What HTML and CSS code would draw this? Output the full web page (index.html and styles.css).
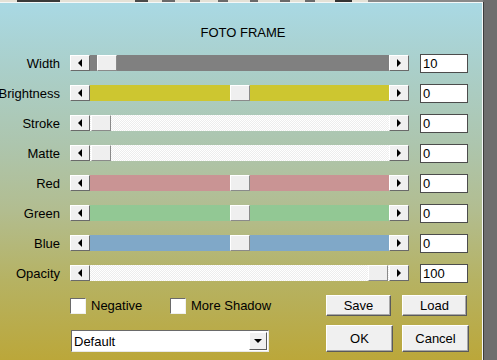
FILE: index.html
```html
<!DOCTYPE html>
<html>
<head>
<meta charset="utf-8">
<link rel="stylesheet" href="styles.css">
</head>
<body>
<div class="strip"></div>
<div class="desk">
  <div class="dialog">
    <div class="title">FOTO FRAME</div>

    <div class="row">
      <div class="label">Width</div>
      <div class="slider">
        <div class="abtn"><span class="tri-l"></span></div>
        <div class="track t-gray"><div class="thumb" style="left:7px"></div></div>
        <div class="abtn"><span class="tri-r"></span></div>
      </div>
      <div class="num">10</div>
    </div>

    <div class="row">
      <div class="label">Brightness</div>
      <div class="slider">
        <div class="abtn"><span class="tri-l"></span></div>
        <div class="track t-yellow"><div class="thumb" style="left:140px"></div></div>
        <div class="abtn"><span class="tri-r"></span></div>
      </div>
      <div class="num">0</div>
    </div>

    <div class="row">
      <div class="label">Stroke</div>
      <div class="slider">
        <div class="abtn"><span class="tri-l"></span></div>
        <div class="track t-white"><div class="thumb" style="left:1px"></div></div>
        <div class="abtn"><span class="tri-r"></span></div>
      </div>
      <div class="num">0</div>
    </div>

    <div class="row">
      <div class="label">Matte</div>
      <div class="slider">
        <div class="abtn"><span class="tri-l"></span></div>
        <div class="track t-white"><div class="thumb" style="left:1px"></div></div>
        <div class="abtn"><span class="tri-r"></span></div>
      </div>
      <div class="num">0</div>
    </div>

    <div class="row">
      <div class="label">Red</div>
      <div class="slider">
        <div class="abtn"><span class="tri-l"></span></div>
        <div class="track t-red"><div class="thumb" style="left:140px"></div></div>
        <div class="abtn"><span class="tri-r"></span></div>
      </div>
      <div class="num">0</div>
    </div>

    <div class="row">
      <div class="label">Green</div>
      <div class="slider">
        <div class="abtn"><span class="tri-l"></span></div>
        <div class="track t-green"><div class="thumb" style="left:140px"></div></div>
        <div class="abtn"><span class="tri-r"></span></div>
      </div>
      <div class="num">0</div>
    </div>

    <div class="row">
      <div class="label">Blue</div>
      <div class="slider">
        <div class="abtn"><span class="tri-l"></span></div>
        <div class="track t-blue"><div class="thumb" style="left:140px"></div></div>
        <div class="abtn"><span class="tri-r"></span></div>
      </div>
      <div class="num">0</div>
    </div>

    <div class="row">
      <div class="label">Opacity</div>
      <div class="slider">
        <div class="abtn"><span class="tri-l"></span></div>
        <div class="track t-white"><div class="thumb" style="left:278px"></div></div>
        <div class="abtn"><span class="tri-r"></span></div>
      </div>
      <div class="num">100</div>
    </div>

    <div class="bottom-a">
      <div class="checks">
        <label class="check c1"><span class="box"></span>Negative</label>
        <label class="check"><span class="box"></span>More Shadow</label>
      </div>
      <div class="btn small">Save</div>
      <div class="btn small">Load</div>
    </div>

    <div class="bottom-b">
      <div class="select">
        <span class="sel-text">Default</span>
        <span class="sel-btn"><span class="tri-d"></span></span>
      </div>
      <div class="btn big ok">OK</div>
      <div class="btn big">Cancel</div>
    </div>
  </div>
  <div class="side"></div>
</div>
</body>
</html>
```

FILE: styles.css
```css
html, body {
  margin: 0;
  padding: 0;
}
body {
  width: 497px;
  height: 360px;
  overflow: hidden;
  background: #6e6e6e;
  font-family: "Liberation Sans", Arial, sans-serif;
  font-size: 13px;
  color: #000;
}
.strip {
  height: 2px;
  background:
    linear-gradient(90deg, transparent 0 17px, #3a3a3a 17px 60px, transparent 60px 135px, #4a4a4a 135px 148px, transparent 148px 162px, #6a6a6a 162px 175px, transparent 175px 190px, #6a6a6a 190px 200px, transparent 200px 218px, #6a6a6a 218px 228px, transparent 228px 250px, #6a6a6a 250px 258px, transparent 258px 280px, #6a6a6a 280px 290px, transparent 290px 305px, #6a6a6a 305px 315px, transparent 315px 335px, #333 335px 352px, transparent 352px 368px, #8a8a8a 368px 483px, #6e6e6e 483px),
    #e4e1d6;
}
.desk {
  display: flex;
  height: 358px;
  overflow: hidden;
}
.dialog {
  width: 483px;
  height: 358px;
  box-sizing: border-box;
  flex: none;
  border-top: 1px solid #f4f8f8;
  border-right: 1px solid #f4f8f8;
  box-shadow: 1px 0 0 #3c3c3c;
  background: linear-gradient(180deg, #a9d9e4 0%, #aacfca 18%, #adc5ad 40%, #b2bd90 58%, #b6b262 78%, #bba73a 100%);
  padding-top: 22px;
}
.side {
  flex: 1;
}
.title {
  height: 16px;
  line-height: 16px;
  text-align: center;
  margin-bottom: 7px;
  padding-left: 4px;
}
.row {
  display: flex;
  align-items: center;
  height: 30px;
}
.label {
  width: 60px;
  text-align: right;
  margin-right: 10px;
  white-space: nowrap;
  direction: rtl;
}
.slider {
  display: flex;
  width: 339px;
  height: 16px;
}
.abtn {
  width: 20px;
  height: 16px;
  box-sizing: border-box;
  background: #f0f0f0;
  border-top: 1px solid #fff;
  border-left: 1px solid #fff;
  border-right: 1px solid #6a6a6a;
  border-bottom: 1px solid #6a6a6a;
  display: flex;
  align-items: center;
  justify-content: center;
  flex: none;
}
.tri-l {
  width: 0;
  height: 0;
  border-top: 4px solid transparent;
  border-bottom: 4px solid transparent;
  border-right: 4px solid #000;
}
.tri-r {
  width: 0;
  height: 0;
  border-top: 4px solid transparent;
  border-bottom: 4px solid transparent;
  border-left: 4px solid #000;
}
.track {
  position: relative;
  flex: 1;
  height: 16px;
}
.t-gray { background: #808080; }
.t-yellow { background: #cdc630; }
.t-red { background: #c99494; }
.t-green { background: #92c894; }
.t-blue { background: #80a8c8; }
.t-white {
  background: repeating-conic-gradient(#ffffff 0 25%, #ededed 0 50%) 0 0 / 2px 2px;
}
.thumb {
  position: absolute;
  top: 0;
  width: 20px;
  height: 16px;
  box-sizing: border-box;
  background: #efefef;
  border-top: 1px solid #fff;
  border-left: 1px solid #fff;
  border-right: 1px solid #8a8a8a;
  border-bottom: 1px solid #8a8a8a;
}
.num {
  margin-left: 11px;
  width: 48px;
  height: 19px;
  box-sizing: border-box;
  background: #fff;
  border: 1px solid #4c4c4c;
  padding-left: 2px;
  line-height: 17px;
  font-size: 13px;
}
.bottom-a {
  display: flex;
  align-items: center;
  height: 21px;
  margin-top: 7px;
  padding-left: 70px;
}
.checks {
  display: flex;
  width: 256px;
}
.check {
  display: flex;
  align-items: center;
}
.c1 {
  width: 100px;
}
.box {
  width: 16px;
  height: 16px;
  box-sizing: border-box;
  background: #fff;
  border-top: 1px solid #6a6a6a;
  border-left: 1px solid #6a6a6a;
  border-right: 1px solid #f0f0f0;
  border-bottom: 1px solid #f0f0f0;
  margin-right: 5px;
}
.btn {
  box-sizing: border-box;
  background: #f0f0f0;
  border-top: 1px solid #fff;
  border-left: 1px solid #fff;
  border-right: 1px solid #5a5a5a;
  border-bottom: 1px solid #5a5a5a;
  box-shadow: inset -1px -1px 0 #a8a8a8;
  display: flex;
  align-items: center;
  justify-content: center;
  margin-right: 11px;
}
.small {
  width: 65px;
  height: 21px;
}
.big {
  width: 67px;
  height: 27px;
}
.ok {
  margin-right: 9px;
}
.bottom-b {
  display: flex;
  align-items: flex-end;
  height: 27px;
  margin-top: 9px;
  padding-left: 71px;
}
.select {
  width: 198px;
  height: 22px;
  box-sizing: border-box;
  background: #fff;
  border-top: 1px solid #6a6a6a;
  border-left: 1px solid #6a6a6a;
  border-right: 1px solid #e8e8e8;
  border-bottom: 1px solid #e8e8e8;
  display: flex;
  align-items: center;
  margin-right: 57px;
  padding-left: 2px;
}
.sel-text {
  flex: 1;
}
.sel-btn {
  width: 18px;
  height: 18px;
  margin-right: 1px;
  box-sizing: border-box;
  background: #f0f0f0;
  border-top: 1px solid #fff;
  border-left: 1px solid #fff;
  border-right: 1px solid #5a5a5a;
  border-bottom: 1px solid #5a5a5a;
  display: flex;
  align-items: center;
  justify-content: center;
}
.tri-d {
  width: 0;
  height: 0;
  border-left: 4px solid transparent;
  border-right: 4px solid transparent;
  border-top: 4px solid #000;
}
```
